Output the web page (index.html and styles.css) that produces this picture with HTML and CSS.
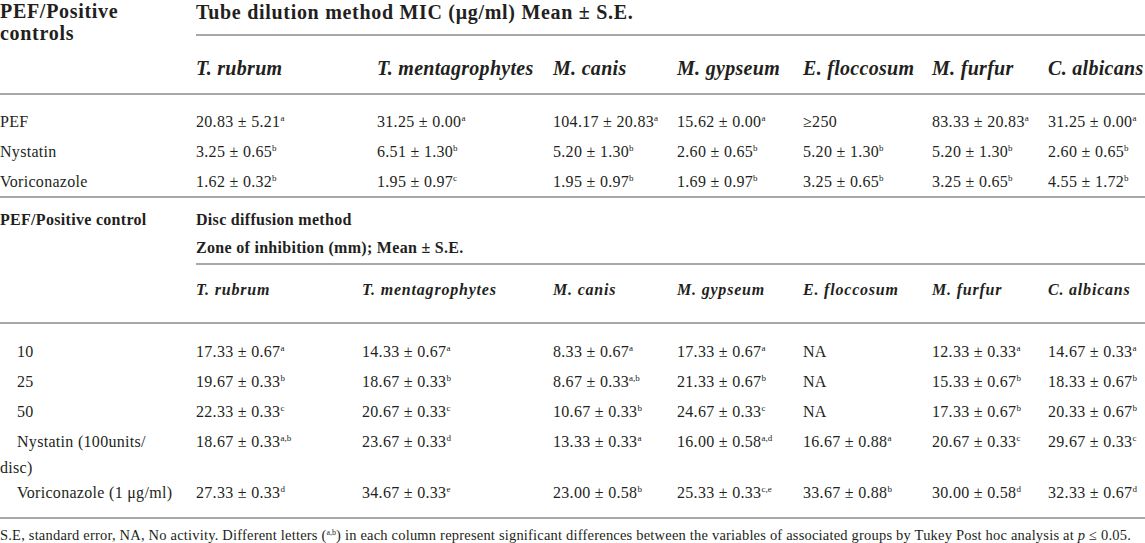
FILE: index.html
```html
<!DOCTYPE html>
<html lang="en">
<head>
    <meta charset="UTF-8">
    <title>Antifungal activity of PEF</title>
    <link rel="stylesheet" href="styles.css">
</head>
<body>
    <table class="results mic">
        <colgroup>
            <col style="width: 196px"><col style="width: 181px"><col style="width: 176px"><col style="width: 124px">
            <col style="width: 126px"><col style="width: 129px"><col style="width: 116px"><col style="width: 97px">
        </colgroup>
        <thead>
            <tr>
                <th class="group-label" rowspan="2">PEF/Positive<br>controls</th>
                <th class="method" colspan="7">Tube dilution method MIC (μg/ml) Mean ± S.E.</th>
            </tr>
            <tr class="species">
                <th>T. rubrum</th>
                <th>T. mentagrophytes</th>
                <th>M. canis</th>
                <th>M. gypseum</th>
                <th>E. floccosum</th>
                <th>M. furfur</th>
                <th>C. albicans</th>
            </tr>
        </thead>
        <tbody>
            <tr class="first">
                <td>PEF</td>
                <td>20.83 ± 5.21<sup>a</sup></td>
                <td>31.25 ± 0.00<sup>a</sup></td>
                <td>104.17 ± 20.83<sup>a</sup></td>
                <td>15.62 ± 0.00<sup>a</sup></td>
                <td>≥250</td>
                <td>83.33 ± 20.83<sup>a</sup></td>
                <td>31.25 ± 0.00<sup>a</sup></td>
            </tr>
            <tr>
                <td>Nystatin</td>
                <td>3.25 ± 0.65<sup>b</sup></td>
                <td>6.51 ± 1.30<sup>b</sup></td>
                <td>5.20 ± 1.30<sup>b</sup></td>
                <td>2.60 ± 0.65<sup>b</sup></td>
                <td>5.20 ± 1.30<sup>b</sup></td>
                <td>5.20 ± 1.30<sup>b</sup></td>
                <td>2.60 ± 0.65<sup>b</sup></td>
            </tr>
            <tr class="last">
                <td>Voriconazole</td>
                <td>1.62 ± 0.32<sup>b</sup></td>
                <td>1.95 ± 0.97<sup>c</sup></td>
                <td>1.95 ± 0.97<sup>b</sup></td>
                <td>1.69 ± 0.97<sup>b</sup></td>
                <td>3.25 ± 0.65<sup>b</sup></td>
                <td>3.25 ± 0.65<sup>b</sup></td>
                <td>4.55 ± 1.72<sup>b</sup></td>
            </tr>
        </tbody>
    </table>

    <table class="results disc">
        <colgroup>
            <col style="width: 196px"><col style="width: 166px"><col style="width: 191px"><col style="width: 124px">
            <col style="width: 126px"><col style="width: 129px"><col style="width: 116px"><col style="width: 97px">
        </colgroup>
        <thead>
            <tr>
                <th class="group-label" rowspan="2">PEF/Positive control</th>
                <th class="method" colspan="7">Disc diffusion method<br>Zone of inhibition (mm); Mean ± S.E.</th>
            </tr>
            <tr class="species">
                <th>T. rubrum</th>
                <th>T. mentagrophytes</th>
                <th>M. canis</th>
                <th>M. gypseum</th>
                <th>E. floccosum</th>
                <th>M. furfur</th>
                <th>C. albicans</th>
            </tr>
        </thead>
        <tbody>
            <tr class="first">
                <td>10</td>
                <td>17.33 ± 0.67<sup>a</sup></td>
                <td>14.33 ± 0.67<sup>a</sup></td>
                <td>8.33 ± 0.67<sup>a</sup></td>
                <td>17.33 ± 0.67<sup>a</sup></td>
                <td>NA</td>
                <td>12.33 ± 0.33<sup>a</sup></td>
                <td>14.67 ± 0.33<sup>a</sup></td>
            </tr>
            <tr>
                <td>25</td>
                <td>19.67 ± 0.33<sup>b</sup></td>
                <td>18.67 ± 0.33<sup>b</sup></td>
                <td>8.67 ± 0.33<sup>a,b</sup></td>
                <td>21.33 ± 0.67<sup>b</sup></td>
                <td>NA</td>
                <td>15.33 ± 0.67<sup>b</sup></td>
                <td>18.33 ± 0.67<sup>b</sup></td>
            </tr>
            <tr>
                <td>50</td>
                <td>22.33 ± 0.33<sup>c</sup></td>
                <td>20.67 ± 0.33<sup>c</sup></td>
                <td>10.67 ± 0.33<sup>b</sup></td>
                <td>24.67 ± 0.33<sup>c</sup></td>
                <td>NA</td>
                <td>17.33 ± 0.67<sup>b</sup></td>
                <td>20.33 ± 0.67<sup>b</sup></td>
            </tr>
            <tr class="wrapped">
                <td>Nystatin (100units/<br>disc)</td>
                <td>18.67 ± 0.33<sup>a,b</sup></td>
                <td>23.67 ± 0.33<sup>d</sup></td>
                <td>13.33 ± 0.33<sup>a</sup></td>
                <td>16.00 ± 0.58<sup>a,d</sup></td>
                <td>16.67 ± 0.88<sup>a</sup></td>
                <td>20.67 ± 0.33<sup>c</sup></td>
                <td>29.67 ± 0.33<sup>c</sup></td>
            </tr>
            <tr class="last">
                <td>Voriconazole (1 μg/ml)</td>
                <td>27.33 ± 0.33<sup>d</sup></td>
                <td>34.67 ± 0.33<sup>e</sup></td>
                <td>23.00 ± 0.58<sup>b</sup></td>
                <td>25.33 ± 0.33<sup>c,e</sup></td>
                <td>33.67 ± 0.88<sup>b</sup></td>
                <td>30.00 ± 0.58<sup>d</sup></td>
                <td>32.33 ± 0.67<sup>d</sup></td>
            </tr>
        </tbody>
    </table>

    <p class="footnote">S.E, standard error, NA, No activity. Different letters (<sup>a,b</sup>) in each column represent significant differences between the variables of associated groups by Tukey Post hoc analysis at <i>p</i> ≤ 0.05.</p>
</body>
</html>
```

FILE: styles.css
```css
body {
    margin: 0;
    background-color: #fff;
    color: #231f20;
    font-family: "Liberation Serif", "Times New Roman", serif;
}

.results {
    width: 1145px;
    table-layout: fixed;
    border-collapse: collapse;
}

.results th,
.results td {
    padding: 0;
    text-align: left;
    vertical-align: top;
    white-space: nowrap;
}

.results td {
    font-size: 16px;
    letter-spacing: 0.3px;
    line-height: 24px;
    padding: 3px 0;
}

sup {
    font-size: 9px;
    line-height: 0;
    vertical-align: 6px;
    letter-spacing: 0;
}

/* top table: tube dilution */
.mic th {
    font-size: 20px;
    font-weight: bold;
    letter-spacing: 0.7px;
}

.mic .group-label {
    line-height: 22px;
    border-bottom: 2px solid #a8a8a8;
}

.mic .method {
    height: 34px;
    line-height: 24px;
    border-bottom: 2px solid #a8a8a8;
}

.mic .species th {
    font-style: italic;
    letter-spacing: 0.3px;
    height: 50px;
    padding-top: 7px;
    vertical-align: middle;
    border-bottom: 2px solid #a8a8a8;
}

.mic tr.first td {
    padding-top: 15px;
}

.mic tr.last td {
    padding-bottom: 2px;
    border-bottom: 2px solid #a8a8a8;
}

/* bottom table: disc diffusion */
.disc th {
    font-size: 16px;
    font-weight: bold;
    letter-spacing: 0.3px;
}

.disc .group-label {
    padding-top: 8px;
    line-height: 28px;
    border-bottom: 2px solid #a8a8a8;
}

.disc .method {
    padding-top: 8px;
    padding-bottom: 1px;
    line-height: 28px;
    border-bottom: 2px solid #a8a8a8;
}

.disc .species th {
    font-style: italic;
    letter-spacing: 0.8px;
    padding-top: 12px;
    padding-bottom: 19px;
    line-height: 26px;
    border-bottom: 2px solid #a8a8a8;
}

.disc td:first-child {
    text-indent: 17px;
}

.disc tr.first td {
    padding-top: 16px;
}

.disc tr.wrapped td {
    padding-top: 2px;
    padding-bottom: 0;
    line-height: 26px;
}

.disc tr.last td {
    padding-top: 0;
    padding-bottom: 12px;
    border-bottom: 2px solid #a8a8a8;
}

.footnote {
    margin: 0;
    padding-top: 6px;
    font-size: 14.5px;
    letter-spacing: 0.2px;
    line-height: 20px;
    white-space: nowrap;
}

.footnote sup {
    font-size: 8px;
    vertical-align: 5px;
}
```
